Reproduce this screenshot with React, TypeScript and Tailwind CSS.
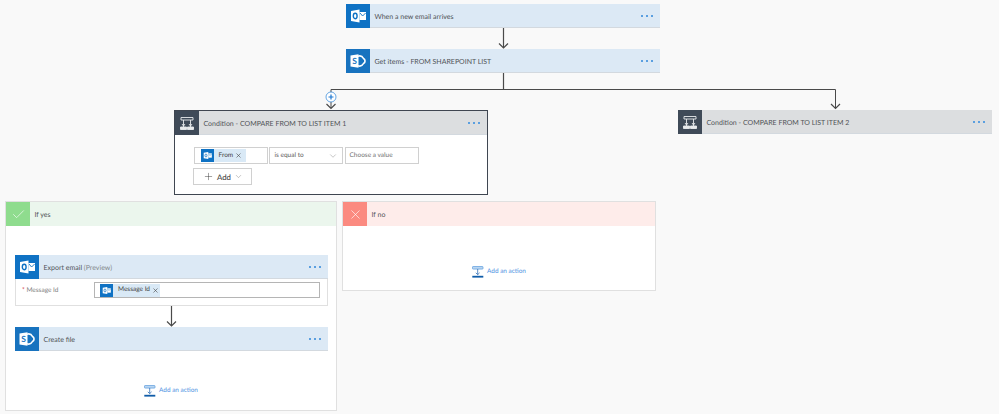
import type { ReactNode } from "react";
import { ChevronDown, Check, Plus, X } from "lucide-react";

function OutlookIcon({ size = 24 }: { size?: number }) {
  return (
    <svg width={size} height={size} viewBox="0 0 24 24" className="shrink-0 bg-[#0f72c4]">
      <path d="M13.5 8h6.5v8h-6.5z" fill="#fff" />
      <path d="M14 9l2.6 3 3-3" fill="none" stroke="#0f72c4" strokeWidth="0.9" />
      <path d="M5 7l8.5-1.5v13L5 17z" fill="#fff" />
      <ellipse cx="9.2" cy="12" rx="1.9" ry="2.7" fill="none" stroke="#0f72c4" strokeWidth="1.4" />
    </svg>
  );
}

function SharePointIcon({ size = 24 }: { size?: number }) {
  return (
    <svg width={size} height={size} viewBox="0 0 24 24" className="shrink-0 bg-[#1873bf]">
      <path d="M12 7.2a4.6 4.6 0 0 1 5.5 2.3 2.8 2.8 0 0 1 0 5 4.6 4.6 0 0 1-5.5 2.3" fill="none" stroke="#fff" strokeWidth="1.6" />
      <path d="M4.5 6.5l8-1.2v13.4l-8-1.2z" fill="#fff" />
      <text x="8.5" y="15" textAnchor="middle" fontSize="8.5" fontWeight="700" fill="#1873bf" fontFamily="Lato, sans-serif">
        S
      </text>
    </svg>
  );
}

function ConditionIcon() {
  return (
    <svg width="24" height="24" viewBox="0 0 24 24" className="shrink-0 bg-[#3f4a58]" fill="none" stroke="#e8eaec" strokeWidth="0.9">
      <path d="M6 6.5h12v2.5H6z" />
      <path d="M8.5 9v7M15.5 9v7" />
      <path d="M5.5 16h6v2.5h-6zM12.5 16h6v2.5h-6z" fill="#e8eaec" />
      <path d="M7 13l1.5 2 1.5-2M14 13l1.5 2 1.5-2" />
    </svg>
  );
}

function AddActionIcon() {
  return (
    <svg width="12" height="12" viewBox="0 0 12 12" className="shrink-0" fill="none">
      <rect x="0.5" y="0.5" width="10.5" height="2.6" rx="0.6" fill="#b9d6f2" stroke="#5a9bdc" strokeWidth="0.7" />
      <path d="M5.7 3v5.5M3.8 6.8l1.9 1.9 1.9-1.9" stroke="#2f6fb5" strokeWidth="0.8" />
      <rect x="0.3" y="9.8" width="11" height="1.8" fill="#0f5ca8" />
    </svg>
  );
}

function Dots() {
  return (
    <div className="ml-auto mr-[7px] flex gap-[3px]">
      <span className="size-[2px] bg-[#5a9fe0]" />
      <span className="size-[2px] bg-[#5a9fe0]" />
      <span className="size-[2px] bg-[#5a9fe0]" />
    </div>
  );
}

function Header({ icon, title, tone, children }: { icon: ReactNode; title: string; tone: string; children?: ReactNode }) {
  return (
    <div className={`flex h-6 items-center shadow-[inset_0_-1px_0_#d3d9df] ${tone}`}>
      {icon}
      <span className="ml-[4.5px] whitespace-pre pt-px text-[7px] leading-[12px] text-[#505356]">
        {title}
        {children}
      </span>
      <Dots />
    </div>
  );
}

function Chip({ label, width }: { label: string; width: string }) {
  return (
    <div className={`flex h-[13px] shrink-0 items-center bg-[#d9e9f6] ${width}`}>
      <OutlookIcon size={13} />
      <span className="ml-[5px] whitespace-nowrap text-[6.5px] leading-[12px] text-[#3f3f3f]">{label}</span>
      <X size={7} strokeWidth={2} className="ml-[1.5px] shrink-0 text-[#444]" />
    </div>
  );
}

function AddAction() {
  return (
    <div className="flex items-center justify-center gap-[3px]">
      <AddActionIcon />
      <span className="whitespace-nowrap pt-px text-[6.4px] leading-[12px] text-[#4a90e2]">Add an action</span>
    </div>
  );
}

function Connectors() {
  return (
    <svg width="999" height="414" className="absolute inset-0" fill="none" stroke="#4a4a4a">
      <path d="M503.5 28v20M499 43.5l4.5 4.5 4.5-4.5" strokeWidth="1.2" />
      <path d="M503.5 73v16" strokeWidth="1.2" />
      <path d="M331 108V89.5h504.5V108" strokeWidth="1" />
      <path d="M326.5 104l4.5 4.5 4.5-4.5M831 104l4.5 4.5 4.5-4.5" strokeWidth="1.2" />
      <circle cx="331" cy="97" r="5" fill="#fff" stroke="#3f8fdc" strokeWidth="0.8" />
      <path d="M328.5 97h5M331 94.5v5" stroke="#1f78d1" strokeWidth="1.2" />
    </svg>
  );
}

export default function App() {
  return (
    <div className="relative h-[414px] w-[999px] overflow-hidden bg-[#f9f9f9] font-['Lato',sans-serif] [text-rendering:geometricPrecision]">
      <Connectors />

      <div className="absolute left-[346px] top-[4px] w-[314px]">
        <Header icon={<OutlookIcon />} title="When a new email arrives" tone="bg-[#dce9f5]" />
      </div>
      <div className="absolute left-[346px] top-[49px] w-[314px]">
        <Header icon={<SharePointIcon />} title="Get items - FROM SHAREPOINT LIST" tone="bg-[#dce9f5]" />
      </div>

      <div className="absolute left-[174px] top-[110px] h-[85px] w-[314px] border-[1.5px] border-[#3f4651] bg-white">
        <Header icon={<ConditionIcon />} title="Condition - COMPARE FROM TO LIST ITEM 1" tone="bg-[#dcdee0]" />
        <div className="ml-[18.5px] mt-[12px] flex gap-px">
          <div className="flex h-[17px] w-[74px] items-center border border-[#d0d0d0] pl-[6px]">
            <Chip label="From" width="w-[45px]" />
          </div>
          <div className="flex h-[17px] w-[74px] items-center justify-between border border-[#d0d0d0] pl-[5px] pr-[4px]">
            <span className="text-[6.5px] leading-[12px] text-[#5a5a5a]">is equal to</span>
            <ChevronDown size={10} strokeWidth={1} className="text-[#777]" />
          </div>
          <div className="ml-px flex h-[17px] w-[74px] items-center border border-[#d0d0d0] pl-[4px]">
            <span className="text-[6.5px] leading-[12px] text-[#707070]">Choose a value</span>
          </div>
        </div>
        <div className="ml-[18px] mt-[4px] flex h-[17px] w-[59px] items-center border border-[#d0d0d0] pl-[9px]">
          <Plus size={11} strokeWidth={1} className="text-[#333]" />
          <span className="ml-[3px] text-[7.8px] leading-[12px] font-medium text-[#444]">Add</span>
          <ChevronDown size={9} strokeWidth={1} className="ml-[3px] text-[#666]" />
        </div>
      </div>

      <div className="absolute left-[678px] top-[110px] w-[314px]">
        <Header icon={<ConditionIcon />} title="Condition - COMPARE FROM TO LIST ITEM 2" tone="bg-[#dcdee0]" />
      </div>

      <div className="absolute left-[5px] top-[201px] h-[210px] w-[332px] border border-[#e0e0e0] bg-white">
        <div className="flex h-6 items-center bg-[#ebf6ed]">
          <div className="flex size-6 items-center justify-center bg-[#8fdc8e]">
            <Check size={15} strokeWidth={1} className="text-white" />
          </div>
          <span className="ml-[4.5px] pt-px text-[7px] leading-[12px] text-[#505356]">If yes</span>
        </div>
        <div className="ml-[9px] mt-[29px] w-[313px] shadow-[inset_0_0_0_1px_#e0e0e0]">
          <Header icon={<OutlookIcon />} title="Export email" tone="bg-[#dce9f5]">
            <span className="text-[#85898d]"> (Preview)</span>
          </Header>
          <div className="flex h-[27px] items-start pt-[3px]">
            <span className="ml-[7px] w-[72px] whitespace-nowrap pt-[3px] text-[6.5px] leading-[12px] text-[#808080]">
              <span className="text-[#d13438]">* </span>Message Id
            </span>
            <div className="flex h-[16px] w-[226px] items-center border border-[#b5b5b5] pl-[5px]">
              <Chip label="Message Id" width="w-[60px]" />
            </div>
          </div>
        </div>
        <div className="ml-[9px] w-[313px]">
          <svg width="313" height="21" className="block" fill="none" stroke="#4a4a4a">
            <path d="M156.5 0v20M152 15.5l4.5 4.5 4.5-4.5" strokeWidth="1.2" />
          </svg>
          <Header icon={<SharePointIcon />} title="Create file" tone="bg-[#dce9f5]" />
        </div>
        <div className="mt-[33px]">
          <AddAction />
        </div>
      </div>

      <div className="absolute left-[342px] top-[201px] h-[90px] w-[314px] border border-[#e0e0e0] bg-white">
        <div className="flex h-6 items-center bg-[#feecea]">
          <div className="flex size-6 items-center justify-center bg-[#fb8a80]">
            <X size={15} strokeWidth={1} className="text-white" />
          </div>
          <span className="ml-[4.5px] pt-px text-[7px] leading-[12px] text-[#505356]">If no</span>
        </div>
        <div className="mt-[39px]">
          <AddAction />
        </div>
      </div>
    </div>
  );
}
